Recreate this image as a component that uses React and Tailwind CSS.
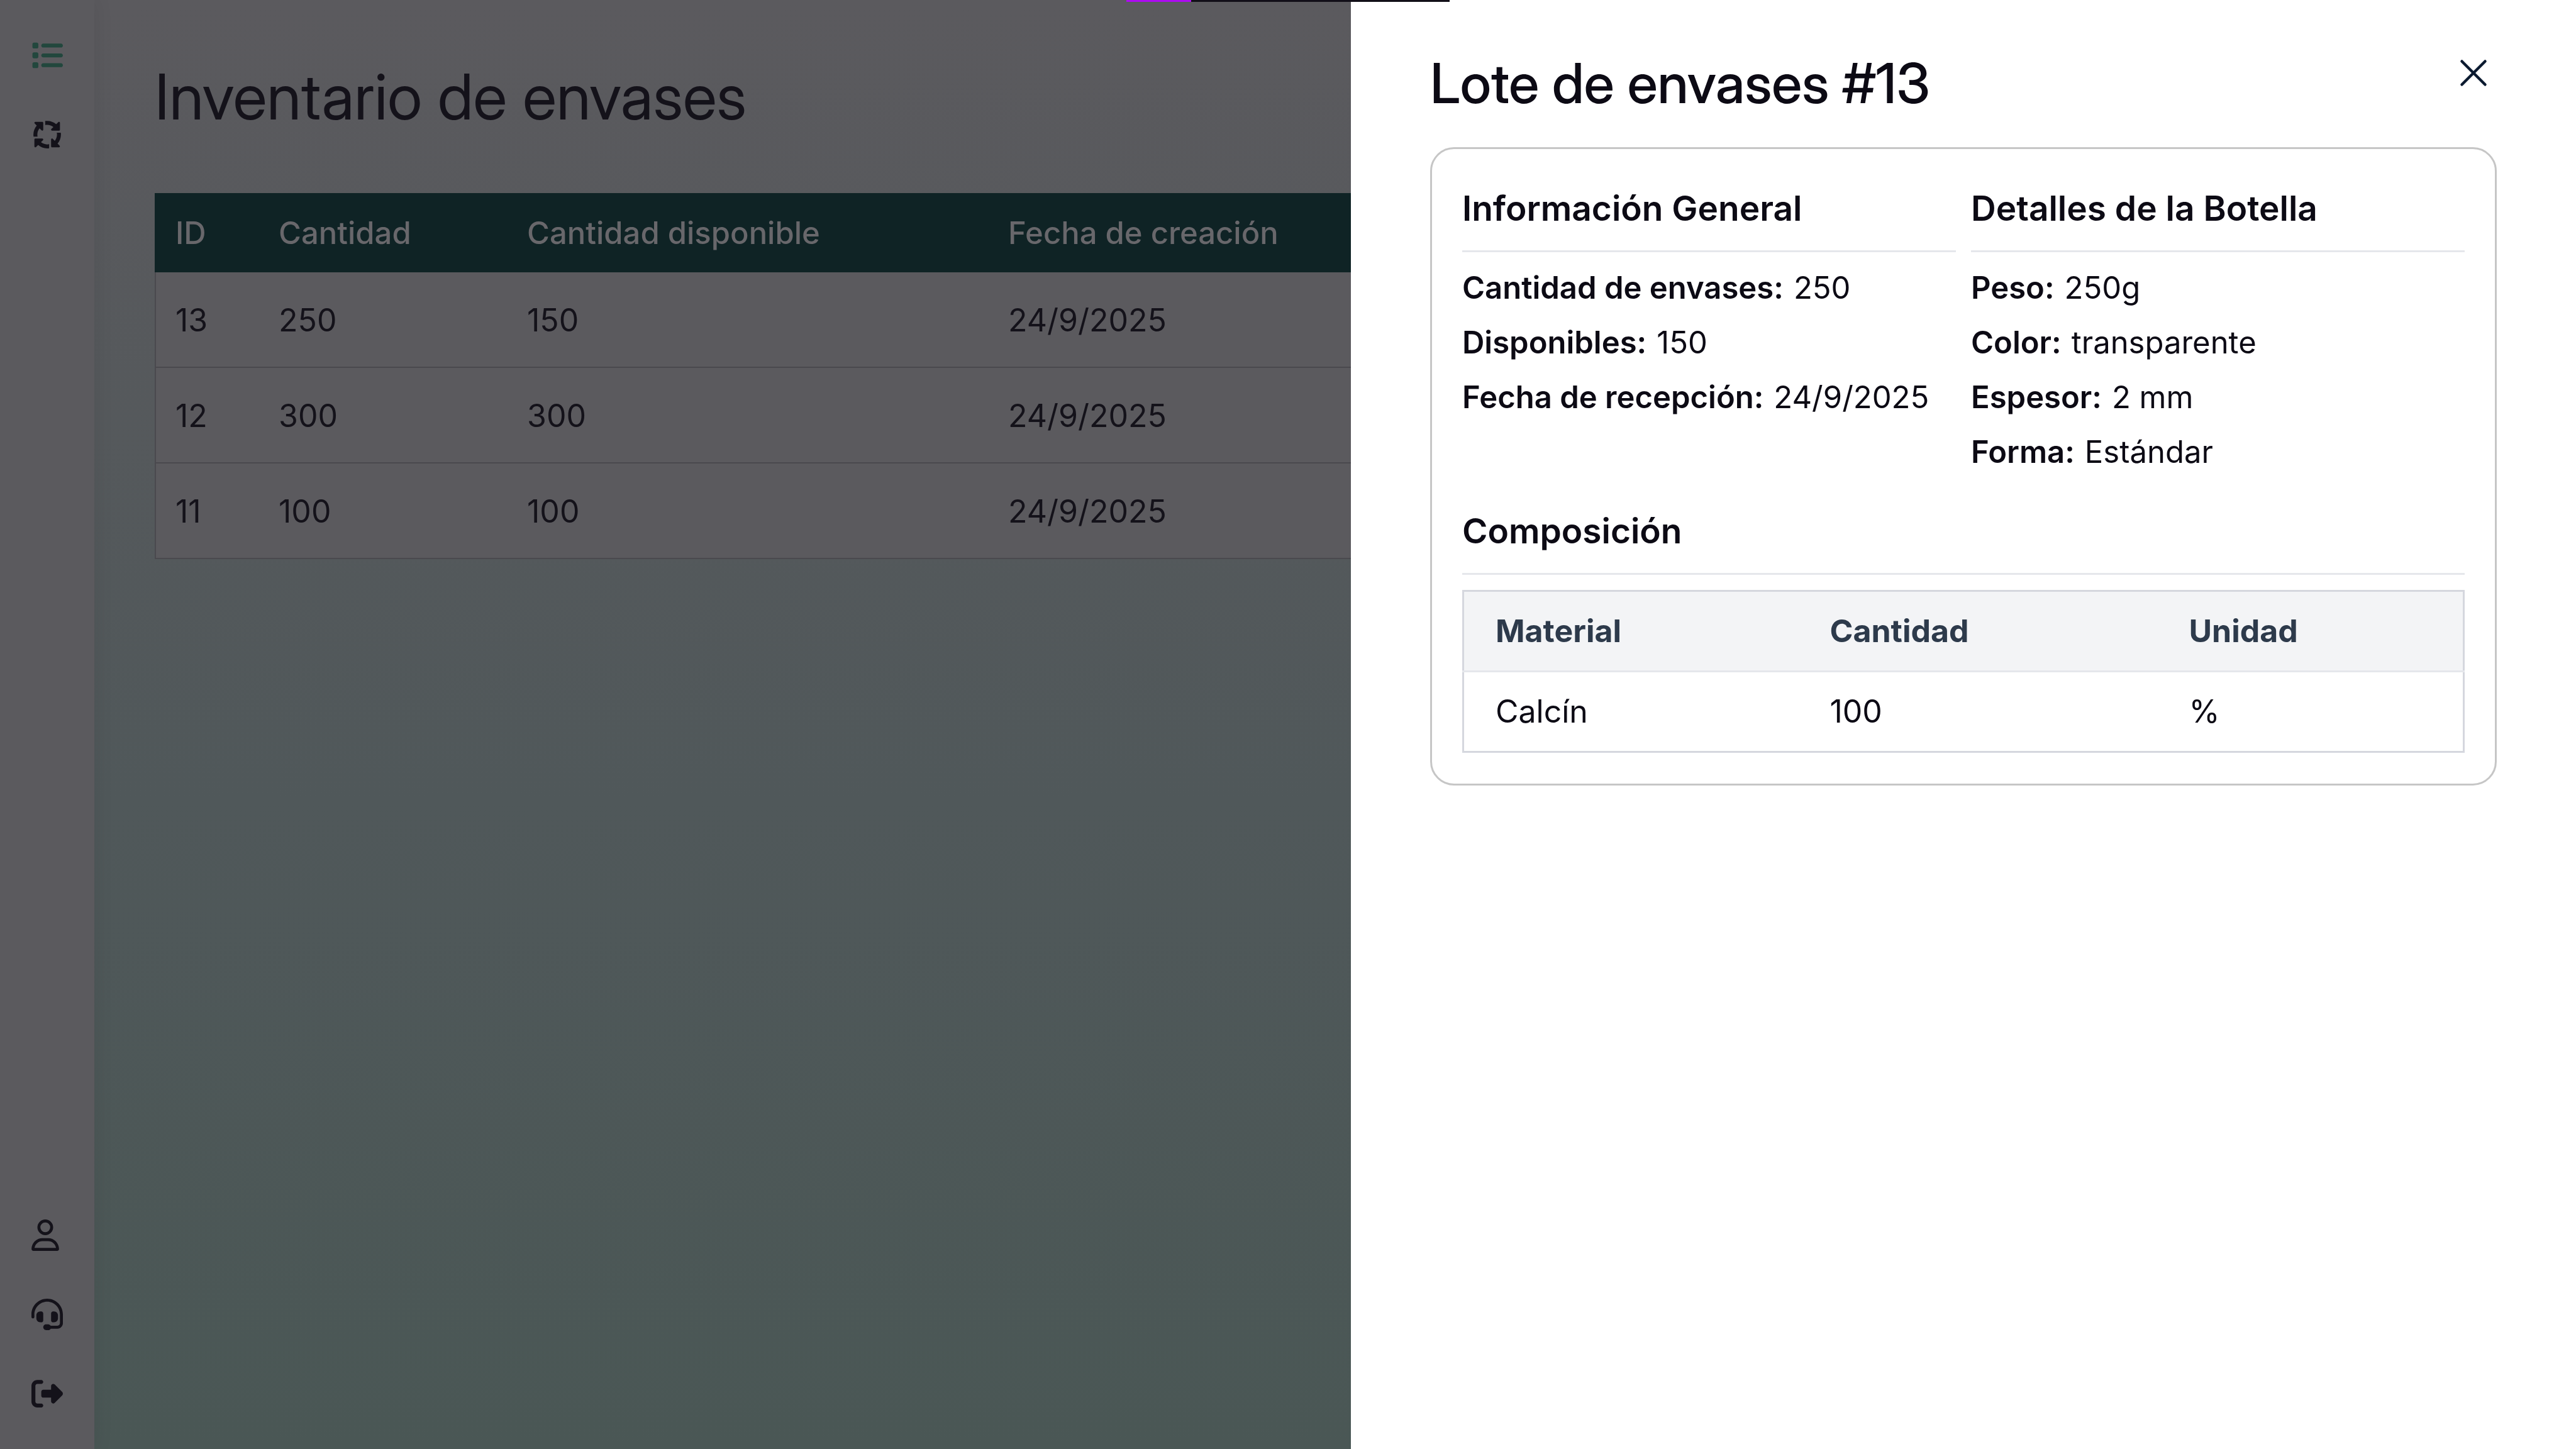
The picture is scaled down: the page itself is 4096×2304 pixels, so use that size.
import React from "react";
import { FaArrowsSpin, FaHeadset, FaList, FaRegUser, FaRightFromBracket } from "react-icons/fa6";

const lots = [
  { id: 13, amount: 250, available: 150, date: "24/9/2025" },
  { id: 12, amount: 300, available: 300, date: "24/9/2025" },
  { id: 11, amount: 100, available: 100, date: "24/9/2025" },
];

const general = [
  ["Cantidad de envases:", "250"],
  ["Disponibles:", "150"],
  ["Fecha de recepción:", "24/9/2025"],
];

const bottle = [
  ["Peso:", "250g"],
  ["Color:", "transparente"],
  ["Espesor:", "2 mm"],
  ["Forma:", "Estándar"],
];

function NavLink({ label, icon: Icon, active, narrow }) {
  return (
    <a
      href="#"
      aria-label={label}
      className={`flex h-[126px] items-center pl-[50px] ${active ? "text-[#22473d]" : "text-[#14121a]"}`}
    >
      <Icon className={narrow ? "h-[50px] w-[44px]" : "size-[50px]"} />
    </a>
  );
}

function Sidebar() {
  return (
    <nav className="z-10 flex w-[150px] shrink-0 flex-col justify-between bg-[#5b5a5e] py-[25px] shadow-[0_0_30px_rgba(20,18,26,0.08)]">
      <div>
        <NavLink label="Inventario" icon={FaList} active />
        <NavLink label="Procesos" icon={FaArrowsSpin} />
      </div>
      <div>
        <NavLink label="Perfil" icon={FaRegUser} narrow />
        <NavLink label="Soporte" icon={FaHeadset} />
        <NavLink label="Cerrar sesión" icon={FaRightFromBracket} />
      </div>
    </nav>
  );
}

function Inventory() {
  return (
    <main className="min-w-0 flex-1 bg-linear-to-b from-[#5b5a5e] via-[#50585a] via-55% to-[#4a5755] px-24 pt-[79px]">
      <h1 className="font-['Inter_Display',Inter,sans-serif] text-[100px] leading-[150px] text-[#14121a]">
        Inventario de envases
      </h1>
      <table className="mt-[78px] w-full table-fixed border-separate border-spacing-0 text-left text-[50px] leading-[75px]">
        <colgroup>
          <col className="w-[164px]" />
          <col className="w-[395px]" />
          <col className="w-[765px]" />
          <col />
        </colgroup>
        <thead className="bg-[#0f2325] text-[49px] text-[#68676b]">
          <tr className="h-[126px]">
            <th className="pl-[33px] font-medium">ID</th>
            <th className="pl-[33px] font-medium">Cantidad</th>
            <th className="pl-[33px] font-medium">Cantidad disponible</th>
            <th className="pl-[33px] font-medium">Fecha de creación</th>
          </tr>
        </thead>
        <tbody className="bg-[#5b5a5e] text-[#14121a]">
          {lots.map((lot) => (
            <tr key={lot.id} className="h-[152px]">
              <td className="border-b-2 border-l-2 border-[#4a494e] pt-[2px] pl-[31px]">{lot.id}</td>
              <td className="border-b-2 border-[#4a494e] pt-[2px] pl-[33px]">{lot.amount}</td>
              <td className="border-b-2 border-[#4a494e] pt-[2px] pl-[33px]">{lot.available}</td>
              <td className="border-b-2 border-[#4a494e] pt-[2px] pl-[33px]">{lot.date}</td>
            </tr>
          ))}
        </tbody>
      </table>
    </main>
  );
}

function SectionTitle({ children }) {
  return (
    <h3 className="border-b-3 border-[#e5e7eb] pb-[25px] text-[55px] leading-[84px] font-semibold">{children}</h3>
  );
}

function Details({ title, items }) {
  return (
    <section>
      <SectionTitle>{title}</SectionTitle>
      <dl className="mt-[13px] text-[49px] leading-[87px]">
        {items.map(([label, value]) => (
          <div key={label} className="flex gap-4">
            <dt className="font-semibold">{label}</dt>
            <dd>{value}</dd>
          </div>
        ))}
      </dl>
    </section>
  );
}

function Drawer() {
  return (
    <aside
      role="dialog"
      aria-labelledby="lot-title"
      className="absolute inset-y-0 right-0 z-20 w-[47.56%] bg-white px-[126px] pt-[66px] text-[50px] text-[#0c0a14]"
    >
      <header className="flex items-start justify-between">
        <h2
          id="lot-title"
          className="font-['Inter_Display',Inter,sans-serif] text-[88px] leading-[132px] font-medium"
        >
          Lote de envases #13
        </h2>
        <button type="button" aria-label="Cerrar" className="mt-[25px] mr-[12px] text-[#0b1a30]">
          <svg viewBox="0 0 50 50" className="size-[50px]" fill="none" stroke="currentColor" strokeWidth="4.5" strokeLinecap="round">
            <path d="M6.5 6.5 43.5 43.5M43.5 6.5 6.5 43.5" />
          </svg>
        </button>
      </header>
      <div className="mt-[36px] rounded-[38px] border-3 border-[#c6c6c6] px-[48px] pt-[52px] pb-[49px]">
        <div className="grid grid-cols-2 gap-6">
          <Details title="Información General" items={general} />
          <Details title="Detalles de la Botella" items={bottle} />
        </div>
        <section className="mt-[40px]">
          <SectionTitle>Composición</SectionTitle>
          <table className="mt-[24px] w-full table-fixed border-collapse border-3 border-[#d5d7de] text-left leading-[75px]">
            <colgroup>
              <col className="w-[533px]" />
              <col className="w-[571px]" />
              <col />
            </colgroup>
            <thead className="bg-[#f3f4f6] text-[#2d3a4b]">
              <tr className="h-[128px] border-b-3 border-[#e5e7eb]">
                <th className="px-[50px] font-bold">Material</th>
                <th className="px-[50px] font-bold">Cantidad</th>
                <th className="px-[50px] font-bold">Unidad</th>
              </tr>
            </thead>
            <tbody>
              <tr className="h-[128px]">
                <td className="px-[50px]">Calcín</td>
                <td className="px-[50px]">100</td>
                <td className="px-[50px]">%</td>
              </tr>
            </tbody>
          </table>
        </section>
      </div>
    </aside>
  );
}

export default function App() {
  return (
    <div className="relative flex min-h-screen overflow-hidden font-[Inter,sans-serif]">
      <Sidebar />
      <Inventory />
      <Drawer />
      <div className="absolute top-0 left-1/2 z-30 h-[3px] w-[514px] -translate-x-1/2 bg-[#120f18]">
        <div className="h-full w-1/5 bg-[#ae0bf2]" />
      </div>
    </div>
  );
}
